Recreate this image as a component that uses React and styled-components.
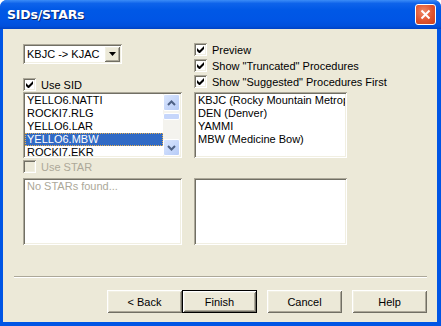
import React from 'react';
import styled, { createGlobalStyle } from 'styled-components';

const GlobalStyle = createGlobalStyle`
  html, body {
    margin: 0;
    padding: 0;
    background: #ffffff;
  }
  body {
    font-family: "Liberation Sans", Arial, sans-serif;
    font-size: 11px;
  }
`;

const sunken = `
  box-shadow:
    inset 1px 1px 0 #aca899,
    inset -1px -1px 0 #ffffff,
    inset 2px 2px 0 #716f64,
    inset -2px -2px 0 #f1efe2;
`;

const raised = `
  box-shadow:
    inset 1px 1px 0 #ffffff,
    inset -1px -1px 0 #716f64,
    inset 2px 2px 0 #f1efe2,
    inset -2px -2px 0 #aca899;
`;

const Window = styled.div`
  width: 441px;
  height: 326px;
  background: #0055e5;
  border-radius: 7px 7px 0 0;
  display: flex;
  flex-direction: column;
  overflow: hidden;
  box-sizing: border-box;
`;

const TitleBar = styled.div`
  height: 29px;
  flex: none;
  display: flex;
  align-items: center;
  justify-content: space-between;
  padding: 0 5px 0 7px;
  background: linear-gradient(
    to bottom,
    #3b8cf7 0%,
    #0e63ea 12%,
    #0058e6 35%,
    #0055e5 70%,
    #0050dc 90%,
    #0042c4 100%
  );
`;

const Title = styled.span`
  color: #ffffff;
  font-family: "DejaVu Sans", "Liberation Sans", sans-serif;
  font-weight: bold;
  font-size: 12.5px;
  letter-spacing: -0.2px;
  text-shadow: 1px 1px 0 #0a246a;
`;

const CloseButton = styled.div`
  width: 21px;
  height: 21px;
  box-sizing: border-box;
  border: 1px solid #ffffff;
  border-radius: 3px;
  background: radial-gradient(circle at 40% 35%, #f08a68 0%, #e0532e 55%, #c9401c 100%);
  display: flex;
  align-items: center;
  justify-content: center;
`;

const Body = styled.div`
  flex: 1;
  margin: 0 4px 4px 3px;
  background: #ece9d8;
  display: flex;
  flex-direction: column;
  padding: 14px 10px 9px 11px;
`;

const Grid = styled.div`
  margin-left: 9px;
  display: grid;
  grid-template-columns: 159px 153px;
  grid-template-rows: 49px 66px 20px 67px;
  column-gap: 12px;
`;

const Cell = styled.div`
  display: flex;
  flex-direction: column;
  gap: ${({ gap }) => gap || 0}px;
  padding-top: ${({ top }) => top || 0}px;
`;

const Combo = styled.div`
  width: 99px;
  height: 20px;
  box-sizing: border-box;
  background: #ffffff;
  ${sunken}
  display: flex;
  align-items: center;
  padding: 2px 2px 2px 4px;
  color: #000000;
`;

const ComboText = styled.span`
  flex: 1;
`;

const ComboButton = styled.div`
  width: 16px;
  height: 16px;
  background: #ece9d8;
  ${raised}
  display: flex;
  align-items: center;
  justify-content: center;
`;

const CheckRow = styled.label`
  display: flex;
  align-items: center;
  height: 13px;
  gap: 5px;
  white-space: nowrap;
  margin-top: ${({ mt }) => mt || 0}px;
  color: ${({ disabled }) => (disabled ? '#aca899' : '#000000')};
`;

const Box = styled.span`
  width: 13px;
  height: 13px;
  box-sizing: border-box;
  flex: none;
  background: ${({ disabled }) => (disabled ? '#ece9d8' : '#ffffff')};
  ${sunken}
  display: flex;
  align-items: center;
  justify-content: center;
`;

const ListBox = styled.div`
  position: relative;
  height: 100%;
  box-sizing: border-box;
  background: #ffffff;
  ${sunken}
  padding: 2px;
  overflow: hidden;
`;

const Items = styled.div`
  margin-right: ${({ scroll }) => (scroll ? 17 : 0)}px;
`;

const Item = styled.div`
  height: 13px;
  line-height: 13px;
  padding-left: 2px;
  white-space: nowrap;
  overflow: hidden;
  color: ${({ selected, disabled }) =>
    selected ? '#ffffff' : disabled ? '#aca899' : '#000000'};
  background: ${({ selected }) => (selected ? '#316ac5' : 'transparent')};
  outline: ${({ selected }) => (selected ? '1px dotted #e8b050' : 'none')};
  outline-offset: -1px;
`;

const ScrollBar = styled.div`
  position: absolute;
  top: 2px;
  right: 2px;
  bottom: 2px;
  width: 17px;
  background: #f4f3ee;
  display: flex;
  flex-direction: column;
  justify-content: space-between;
`;

const ScrollButton = styled.div`
  width: 17px;
  height: 17px;
  box-sizing: border-box;
  border: 1px solid #ffffff;
  border-radius: 2px;
  background: linear-gradient(to bottom right, #dae6fe, #b6cbf7);
  display: flex;
  align-items: center;
  justify-content: center;
`;

const Thumb = styled.div`
  position: absolute;
  top: 19px;
  left: 0;
  width: 17px;
  height: 7px;
  box-sizing: border-box;
  border: 1px solid #ffffff;
  border-radius: 2px;
  background: #c6d6fb;
`;

const Spacer = styled.div`
  flex: 1;
`;

const Separator = styled.div`
  height: 2px;
  border-top: 1px solid #aca899;
  border-bottom: 1px solid #ffffff;
  box-sizing: border-box;
`;

const ButtonRow = styled.div`
  display: flex;
  justify-content: flex-end;
  margin-top: 12px;
`;

const Button = styled.div`
  width: 75px;
  height: 23px;
  box-sizing: border-box;
  margin-left: ${({ ml }) => ml || 0}px;
  background: #ece9d8;
  ${raised}
  ${({ primary }) =>
    primary &&
    `box-shadow:
      inset 0 0 0 1px #000000,
      inset 2px 2px 0 #ffffff,
      inset -2px -2px 0 #716f64,
      inset 3px 3px 0 #f1efe2,
      inset -3px -3px 0 #aca899;`}
  display: flex;
  align-items: center;
  justify-content: center;
  color: #000000;
`;

const Check = () => (
  <svg width="7" height="7" viewBox="0 0 7 7">
    <path d="M0 2v3l2 2h1l4-4V0L2.5 4.5z" fill="#000" />
  </svg>
);

const Chevron = ({ up }) => (
  <svg width="9" height="6" viewBox="0 0 9 6">
    <path
      d={up ? 'M1 5L4.5 1.5L8 5' : 'M1 1L4.5 4.5L8 1'}
      fill="none"
      stroke="#4d6185"
      strokeWidth="2"
    />
  </svg>
);

const CheckBox = ({ checked, disabled, label, mt }) => (
  <CheckRow disabled={disabled} mt={mt}>
    <Box disabled={disabled}>{checked && <Check />}</Box>
    {label}
  </CheckRow>
);

const sids = ['YELLO6.NATTI', 'ROCKI7.RLG', 'YELLO6.LAR', 'YELLO6.MBW', 'ROCKI7.EKR'];
const preview = ['KBJC (Rocky Mountain Metropolitan)', 'DEN (Denver)', 'YAMMI', 'MBW (Medicine Bow)'];

export default function App() {
  return (
    <>
      <GlobalStyle />
      <Window>
        <TitleBar>
          <Title>SIDs/STARs</Title>
          <CloseButton>
            <svg width="11" height="11" viewBox="0 0 11 11">
              <path d="M1.5 1.5L9.5 9.5M9.5 1.5L1.5 9.5" stroke="#fff" strokeWidth="2" />
            </svg>
          </CloseButton>
        </TitleBar>
        <Body>
          <Grid>
            <Cell top={1}>
              <Combo>
                <ComboText>KBJC -&gt; KJAC</ComboText>
                <ComboButton>
                  <svg width="7" height="4" viewBox="0 0 7 4">
                    <path d="M0 0h7L3.5 4z" fill="#000" />
                  </svg>
                </ComboButton>
              </Combo>
              <CheckBox checked label="Use SID" mt={14} />
            </Cell>
            <Cell gap={3}>
              <CheckBox checked label="Preview" />
              <CheckBox checked label={'Show "Truncated" Procedures'} />
              <CheckBox checked label={'Show "Suggested" Procedures First'} />
            </Cell>
            <ListBox>
              <Items scroll>
                {sids.map((s, i) => (
                  <Item key={s} selected={i === 3}>{s}</Item>
                ))}
              </Items>
              <ScrollBar>
                <ScrollButton><Chevron up /></ScrollButton>
                <Thumb />
                <ScrollButton><Chevron /></ScrollButton>
              </ScrollBar>
            </ListBox>
            <ListBox>
              <Items>
                {preview.map((s) => (
                  <Item key={s}>{s}</Item>
                ))}
              </Items>
            </ListBox>
            <Cell top={2}>
              <CheckBox disabled label="Use STAR" />
            </Cell>
            <div />
            <ListBox>
              <Items>
                <Item disabled>No STARs found...</Item>
              </Items>
            </ListBox>
            <ListBox />
          </Grid>
          <Spacer />
          <Separator />
          <ButtonRow>
            <Button>&lt; Back</Button>
            <Button primary>Finish</Button>
            <Button ml={10}>Cancel</Button>
            <Button ml={10}>Help</Button>
          </ButtonRow>
        </Body>
      </Window>
    </>
  );
}
